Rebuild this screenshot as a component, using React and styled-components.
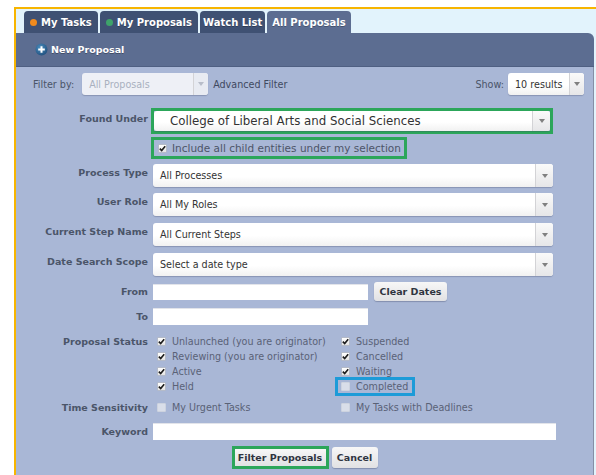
import React from 'react';
import styled, { createGlobalStyle } from 'styled-components';

const GlobalStyle = createGlobalStyle`
  html, body { margin: 0; padding: 0; background: #fff; overflow: hidden; }
  body { font-family: "DejaVu Sans", Verdana, sans-serif; }
  * { box-sizing: border-box; }
`;

const Frame = styled.div`
  margin: 7px 0 0 14px;
  height: 468px;
  border-top: 2px solid #f7b500;
  border-left: 2px solid #f7b500;
  background: #e2f3fc;
  padding-right: 2px;
  display: flex;
  flex-direction: column;
`;

const TabStrip = styled.div`
  display: flex;
  gap: 2px;
  padding: 2px 0 0 8px;
`;

const Tab = styled.div`
  height: 22px;
  padding: 0 ${p => p.$pad}px;
  display: flex;
  align-items: center;
  gap: 4px;
  border-radius: 4px 4px 0 0;
  background: ${p => (p.$active ? '#5c6d91' : '#3f5173')};
  color: #fff;
  font-size: 10px;
  font-weight: bold;
  text-shadow: 0 1px 0 rgba(0, 0, 0, 0.25);
  white-space: nowrap;
`;

const Dot = styled.span`
  width: 7px;
  height: 7px;
  border-radius: 50%;
  background: ${p => p.$color};
`;

const Board = styled.div`
  flex: 1;
  display: flex;
  flex-direction: column;
`;

const Toolbar = styled.div`
  height: 34px;
  background: #5c6d91;
  border-top-right-radius: 6px;
  border-bottom: 1px solid #4f5f82;
  display: flex;
  align-items: center;
  padding-left: 19px;
`;

const NewButton = styled.div`
  display: flex;
  align-items: center;
  gap: 3px;
  color: #fff;
  font-size: 9.5px;
  font-weight: bold;
  text-shadow: 0 1px 0 rgba(0, 0, 0, 0.3);
`;

const FilterPanel = styled.div`
  flex: 1;
  background: #a9b7d6;
  border-right: 1px solid #858fa6;
  padding-top: 6px;
`;

const FilterBar = styled.div`
  display: flex;
  align-items: center;
  height: 22px;
  padding: 0 9px 0 17px;
  font-size: 9.6px;
`;

const BarText = styled.span`
  color: ${p => p.$color || '#4a5468'};
  margin: 0 ${p => p.$mr || 0}px 0 ${p => p.$ml || 0}px;
  white-space: nowrap;
`;

const Spacer = styled.div`
  flex: 1;
`;

const SelectBox = styled.div`
  display: flex;
  width: ${p => p.$w}px;
  height: ${p => p.$h || 23}px;
  background: ${p => (p.$disabled ? '#eef0f6' : 'linear-gradient(#fff, #fff 55%, #f1f1f1)')};
  border-radius: 3px;
  box-shadow: 0 1px 1px rgba(60, 70, 100, 0.3);
  font-size: ${p => p.$fs || 9.6}px;
  color: ${p => (p.$disabled ? '#a9b0bf' : '#333')};
`;

const SelectValue = styled.span`
  flex: 1;
  display: flex;
  align-items: center;
  padding-left: ${p => p.$pl || 7}px;
  white-space: nowrap;
  overflow: hidden;
`;

const SelectArrow = styled.span`
  width: ${p => p.$w || 18}px;
  display: flex;
  align-items: center;
  justify-content: center;
  border-left: 1px solid #d3d3d6;
  border-radius: 0 3px 3px 0;
  background: ${p => (p.$disabled ? '#e8ebf2' : 'linear-gradient(#fafafa, #e6e6e8)')};

  &::after {
    content: '';
    border-left: 3px solid transparent;
    border-right: 3px solid transparent;
    border-top: 4px solid ${p => (p.$disabled ? '#b8bdc9' : '#808080')};
  }
`;

const Form = styled.div`
  margin-top: 13px;
  display: flex;
  flex-direction: column;
`;

const Row = styled.div`
  display: grid;
  grid-template-columns: 132px 1fr;
  column-gap: 5px;
  align-items: ${p => p.$align || 'center'};
  margin-top: ${p => p.$mt || 0}px;
  height: ${p => p.$h}px;
`;

const Label = styled.div`
  text-align: right;
  font-size: 9.5px;
  font-weight: bold;
  color: #4b5569;
  line-height: ${p => p.$lh || 12}px;
  padding-top: ${p => p.$pt || 0}px;
  white-space: nowrap;
`;

const GreenFrame = styled.div`
  border: 3px solid #2ca65a;
  margin-left: -2px;
  width: ${p => p.$w}px;
  display: flex;
  align-items: center;
  justify-self: start;
  height: ${p => p.$h}px;
  padding: ${p => p.$pad || '0'};
`;

const CheckLine = styled.div`
  display: flex;
  align-items: center;
  gap: ${p => p.$gap || 6}px;
  font-size: ${p => p.$fs || 9.6}px;
  color: ${p => p.$color || '#5a6276'};
  white-space: nowrap;
`;

const BoxMark = styled.span`
  width: 9px;
  height: 9px;
  flex: none;
  display: inline-flex;
  align-items: center;
  justify-content: center;
  border-radius: 1px;
  background: ${p => (p.$on ? 'linear-gradient(#ffffff, #e4e4e4)' : '#d9dee9')};
  border: 1px solid ${p => (p.$on ? '#b5bbc8' : '#cdd3df')};
`;

const TextInput = styled.div`
  width: ${p => p.$w}px;
  height: ${p => p.$h}px;
  background: #fff;
  border-top: 1px solid #e2e4ea;
`;

const InlineGroup = styled.div`
  display: flex;
  align-items: center;
  gap: 6px;
`;

const Button = styled.div`
  height: ${p => p.$h || 21}px;
  width: ${p => p.$w}px;
  display: flex;
  align-items: center;
  justify-content: center;
  background: linear-gradient(#f7f7f7, #e1e1e3);
  border-radius: ${p => (p.$flat ? 0 : 3)}px;
  box-shadow: ${p => (p.$flat ? 'none' : '0 1px 1px rgba(60, 70, 100, 0.35)')};
  font-size: 9.5px;
  font-weight: bold;
  color: #2f3440;
  white-space: nowrap;
`;

const StatusGrid = styled.div`
  display: grid;
  grid-template-columns: 184px auto;
  grid-auto-rows: 15px;
`;

const StatusItem = styled(CheckLine)`
  padding-left: 4px;
  justify-self: start;
  padding-right: ${p => (p.$mark ? 5 : 0)}px;
  outline: ${p => (p.$mark ? '3px solid #1d9bd8' : 'none')};
  outline-offset: -1px;
`;

const ButtonRow = styled.div`
  margin-top: 6px;
  height: 23px;
  display: flex;
  justify-content: center;
  align-items: center;
  gap: 3px;
`;

const ButtonFrame = styled.div`
  border: 3px solid #2ca65a;
`;

function Check({ on }) {
  return (
    <BoxMark $on={on}>
      {on && (
        <svg width="7" height="7" viewBox="0 0 7 7">
          <path d="M0.8 3.6 L2.7 5.6 L6.2 1.2" fill="none" stroke="#1c1c1c" strokeWidth="1.6" />
        </svg>
      )}
    </BoxMark>
  );
}

function PlusCircle() {
  return (
    <svg width="13" height="13" viewBox="0 0 13 13">
      <defs>
        <radialGradient id="plusGlow" cx="0.4" cy="0.35" r="0.7">
          <stop offset="0" stopColor="#4d8fc0" />
          <stop offset="1" stopColor="#1f4f7d" />
        </radialGradient>
      </defs>
      <circle cx="6.5" cy="6.5" r="6" fill="url(#plusGlow)" />
      <path d="M6.5 3.2 V9.8 M3.2 6.5 H9.8" stroke="#fff" strokeWidth="2" />
    </svg>
  );
}

function Select({ value, w, h, arrowW, disabled, fs, pl }) {
  return (
    <SelectBox $w={w} $h={h} $disabled={disabled} $fs={fs}>
      <SelectValue $pl={pl}>{value}</SelectValue>
      <SelectArrow $w={arrowW} $disabled={disabled} />
    </SelectBox>
  );
}

const tabs = [
  { label: 'My Tasks', dot: '#f08a1d', pad: 6 },
  { label: 'My Proposals', dot: '#3ea36a', pad: 6 },
  { label: 'Watch List', pad: 3 },
  { label: 'All Proposals', pad: 5, active: true },
];

const selectRows = [
  { label: 'Process Type', value: 'All Processes', mt: 5 },
  { label: 'User Role', value: 'All My Roles', mt: 6 },
  { label: 'Current Step Name', value: 'All Current Steps', mt: 7 },
  { label: 'Date Search Scope', value: 'Select a date type', mt: 7 },
];

const statuses = [
  ['Unlaunched (you are originator)', true],
  ['Suspended', true],
  ['Reviewing (you are originator)', true],
  ['Cancelled', true],
  ['Active', true],
  ['Waiting', true],
  ['Held', true],
  ['Completed', false, true],
];

export default function App() {
  return (
    <>
      <GlobalStyle />
      <Frame>
        <TabStrip>
          {tabs.map(t => (
            <Tab key={t.label} $active={t.active} $pad={t.pad}>
              {t.dot && <Dot $color={t.dot} />}
              {t.label}
            </Tab>
          ))}
        </TabStrip>
        <Board>
          <Toolbar>
            <NewButton>
              <PlusCircle />
              New Proposal
            </NewButton>
          </Toolbar>
          <FilterPanel>
            <FilterBar>
              <BarText $mr={8}>Filter by:</BarText>
              <Select value="All Proposals" w={126} h={22} arrowW={15} disabled />
              <BarText $ml={5} $color="#3f4960">Advanced Filter</BarText>
              <Spacer />
              <BarText $mr={4}>Show:</BarText>
              <Select value="10 results" w={76} h={22} arrowW={15} />
            </FilterBar>

            <Form>
              <Row $h={26} $align="start">
                <Label $pt={5}>Found Under</Label>
                <GreenFrame $w={402} $h={26}>
                  <Select
                    value="College of Liberal Arts and Social Sciences"
                    w={396}
                    h={20}
                    fs={11.8}
                    pl={16}
                  />
                </GreenFrame>
              </Row>

              <Row $h={22} $mt={3}>
                <div />
                <GreenFrame $w={256} $h={22} $pad="0 0 0 4px">
                  <CheckLine $color="#4d5568" $fs={10.5} $gap={5}>
                    <Check on />
                    Include all child entities under my selection
                  </CheckLine>
                </GreenFrame>
              </Row>

              {selectRows.map(r => (
                <Row key={r.label} $h={23} $mt={r.mt} $align="start">
                  <Label $pt={3}>{r.label}</Label>
                  <Select value={r.value} w={400} h={23} />
                </Row>
              ))}

              <Row $h={19} $mt={6}>
                <Label>From</Label>
                <InlineGroup>
                  <TextInput $w={215} $h={16} />
                  <Button $w={73} $h={19}>Clear Dates</Button>
                </InlineGroup>
              </Row>

              <Row $h={17} $mt={7}>
                <Label>To</Label>
                <TextInput $w={215} $h={17} />
              </Row>

              <Row $mt={9} $align="start">
                <Label $lh={15}>Proposal Status</Label>
                <StatusGrid>
                  {statuses.map(([text, on, mark]) => (
                    <StatusItem key={text} $mark={mark}>
                      <Check on={on} />
                      {text}
                    </StatusItem>
                  ))}
                </StatusGrid>
              </Row>

              <Row $mt={6} $align="start">
                <Label $lh={15}>Time Sensitivity</Label>
                <StatusGrid>
                  <StatusItem>
                    <Check on={false} />
                    My Urgent Tasks
                  </StatusItem>
                  <StatusItem>
                    <Check on={false} />
                    My Tasks with Deadlines
                  </StatusItem>
                </StatusGrid>
              </Row>

              <Row $h={17} $mt={8}>
                <Label>Keyword</Label>
                <TextInput $w={403} $h={17} />
              </Row>

              <ButtonRow>
                <ButtonFrame>
                  <Button $w={91} $h={17} $flat>Filter Proposals</Button>
                </ButtonFrame>
                <Button $w={46} $h={21}>Cancel</Button>
              </ButtonRow>
            </Form>
          </FilterPanel>
        </Board>
      </Frame>
    </>
  );
}
